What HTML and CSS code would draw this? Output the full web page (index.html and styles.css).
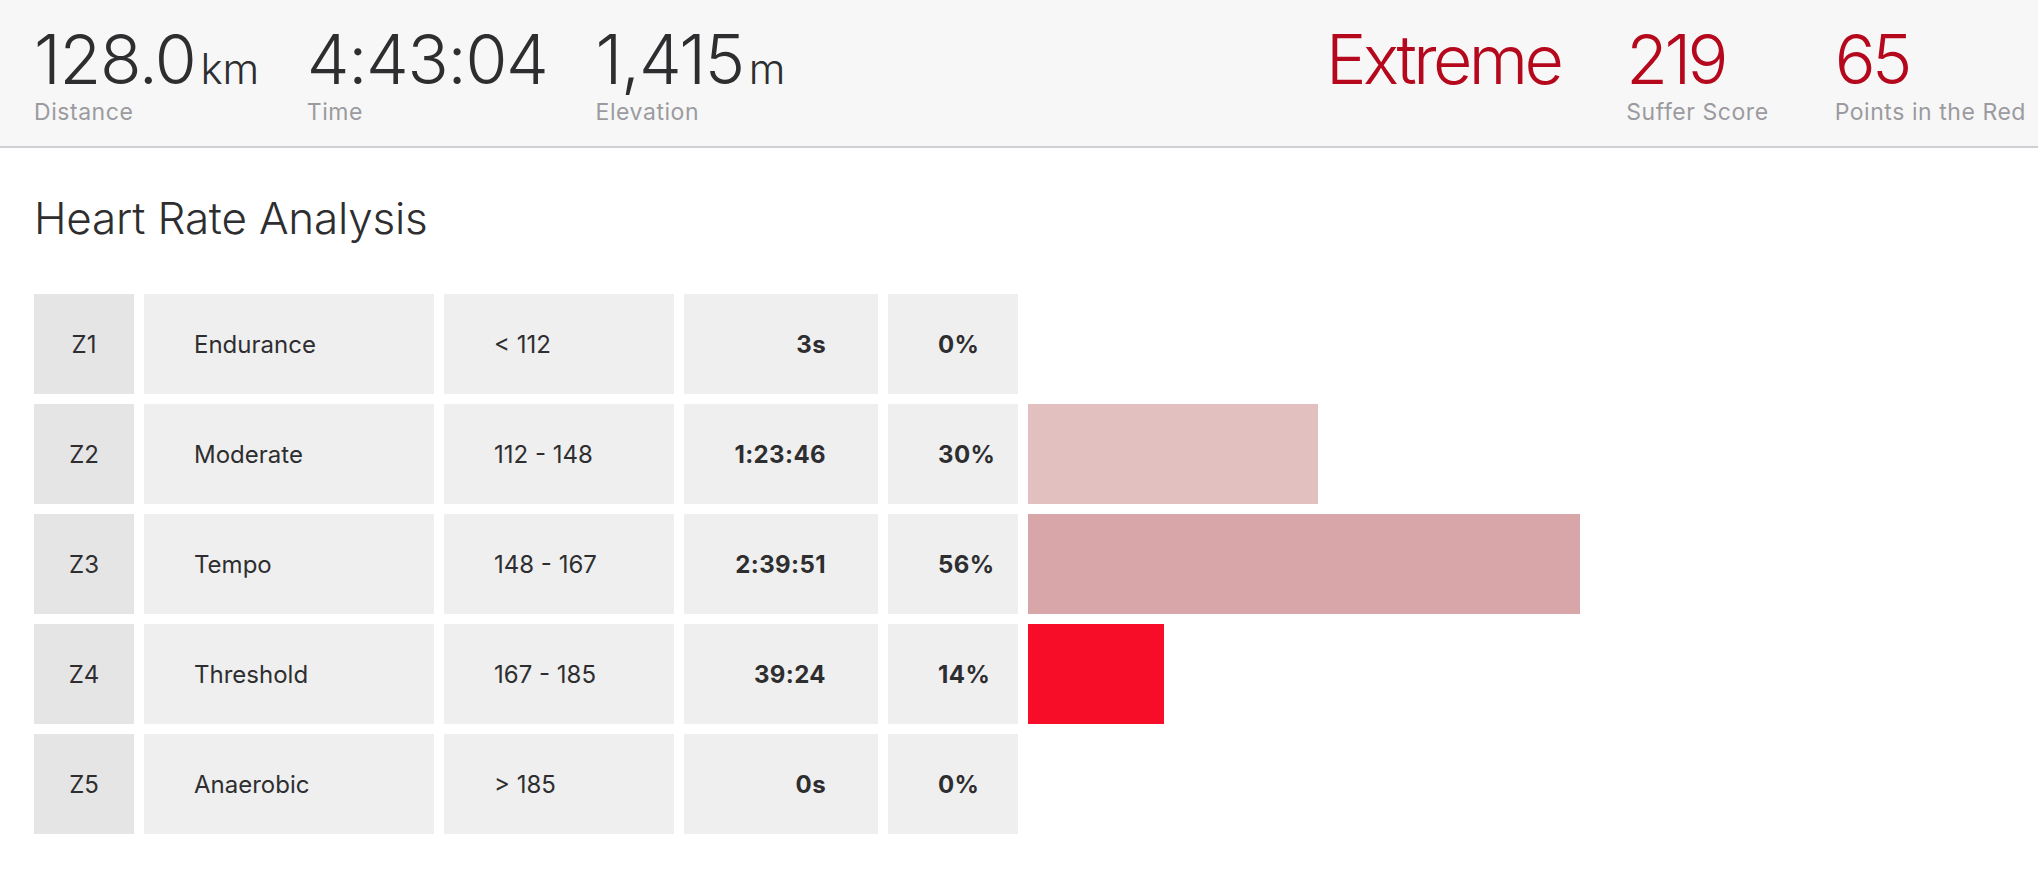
FILE: index.html
```html
<!DOCTYPE html>
<html lang="en">
<head>
  <meta charset="UTF-8" />
  <title>Heart Rate Analysis</title>
  <link rel="stylesheet" href="styles.css">
</head>
<body>
  <header class="summary">
    <div class="stats">
      <div class="stat">
        <div class="stat-value">128.0<span class="unit">km</span></div>
        <div class="stat-label">Distance</div>
      </div>
      <div class="stat">
        <div class="stat-value">4:43:04</div>
        <div class="stat-label">Time</div>
      </div>
      <div class="stat">
        <div class="stat-value">1,415<span class="unit">m</span></div>
        <div class="stat-label">Elevation</div>
      </div>
    </div>

    <div class="stats stats-right">
      <div class="stat">
        <div class="stat-value red">Extreme</div>
      </div>
      <div class="stat">
        <div class="stat-value red">219</div>
        <div class="stat-label">Suffer Score</div>
      </div>
      <div class="stat">
        <div class="stat-value red">65</div>
        <div class="stat-label">Points in the Red</div>
      </div>
    </div>
  </header>

  <section class="analysis">
    <h2>Heart Rate Analysis</h2>

    <div class="zones">
      <div class="zone-row">
        <div class="cell zone">Z1</div>
        <div class="cell">Endurance</div>
        <div class="cell">&lt; 112</div>
        <div class="cell time">3s</div>
        <div class="cell pct">0%</div>
        <div class="bar-cell"></div>
      </div>
      <div class="zone-row">
        <div class="cell zone">Z2</div>
        <div class="cell">Moderate</div>
        <div class="cell">112 - 148</div>
        <div class="cell time">1:23:46</div>
        <div class="cell pct">30%</div>
        <div class="bar-cell"><div class="bar bar-z2" style="width: 290px"></div></div>
      </div>
      <div class="zone-row">
        <div class="cell zone">Z3</div>
        <div class="cell">Tempo</div>
        <div class="cell">148 - 167</div>
        <div class="cell time">2:39:51</div>
        <div class="cell pct">56%</div>
        <div class="bar-cell"><div class="bar bar-z3" style="width: 552px"></div></div>
      </div>
      <div class="zone-row">
        <div class="cell zone">Z4</div>
        <div class="cell">Threshold</div>
        <div class="cell">167 - 185</div>
        <div class="cell time">39:24</div>
        <div class="cell pct">14%</div>
        <div class="bar-cell"><div class="bar bar-z4" style="width: 136px"></div></div>
      </div>
      <div class="zone-row">
        <div class="cell zone">Z5</div>
        <div class="cell">Anaerobic</div>
        <div class="cell">&gt; 185</div>
        <div class="cell time">0s</div>
        <div class="cell pct">0%</div>
        <div class="bar-cell"></div>
      </div>
    </div>
  </section>
</body>
</html>
```

FILE: styles.css
```css
body {
  font-family: Inter, Roboto, "Liberation Sans", sans-serif;
  background-color: #ffffff;
  color: #2e2e30;
  margin: 0;
  padding: 0;
}
.summary {
  display: flex;
  justify-content: space-between;
  align-items: flex-start;
  height: 148px;
  box-sizing: border-box;
  padding: 24px 12px 0 34px;
  background-color: #f7f7f7;
  border-bottom: 2px solid #d0d0d4;
}
.stats {
  display: flex;
  align-items: flex-start;
  gap: 48px;
}
.stats-right {
  gap: 66px;
}
.stat-value {
  font-size: 68px;
  line-height: 70px;
  height: 70px;
  font-weight: 300;
  letter-spacing: -1.3px;
  white-space: nowrap;
}
.stat-value.red {
  color: #b5081c;
  letter-spacing: -3.6px;
}
.unit {
  font-size: 42px;
  line-height: 1;
  margin-left: 5px;
  letter-spacing: -0.3px;
}
.stat-label {
  margin-top: 7px;
  font-size: 23px;
  line-height: 23px;
  letter-spacing: 0.55px;
  color: #9b9b9f;
}
.analysis {
  padding: 0 34px;
}
.analysis h2 {
  margin: 0;
  padding-top: 46px;
  font-size: 44px;
  line-height: 48px;
  font-weight: 300;
  letter-spacing: -0.2px;
}
.zones {
  display: flex;
  flex-direction: column;
  gap: 10px;
  margin-top: 52px;
}
.zone-row {
  display: grid;
  grid-template-columns: 100px 290px 230px 194px 130px 1fr;
  gap: 10px;
  height: 100px;
}
.cell {
  display: flex;
  align-items: center;
  padding: 0 50px;
  background-color: #efefef;
  font-size: 24px;
}
.zone {
  justify-content: center;
  padding: 0;
  background-color: #e5e5e5;
}
.time {
  justify-content: flex-end;
  padding-right: 52px;
  font-weight: 700;
  letter-spacing: 0.4px;
}
.pct {
  font-weight: 700;
  letter-spacing: 0.4px;
}
.bar-cell {
  display: flex;
}
.bar {
  height: 100%;
}
.bar-z2 {
  background-color: #e2c0c0;
}
.bar-z3 {
  background-color: #d8a6a8;
}
.bar-z4 {
  background-color: #f70d27;
}
```
